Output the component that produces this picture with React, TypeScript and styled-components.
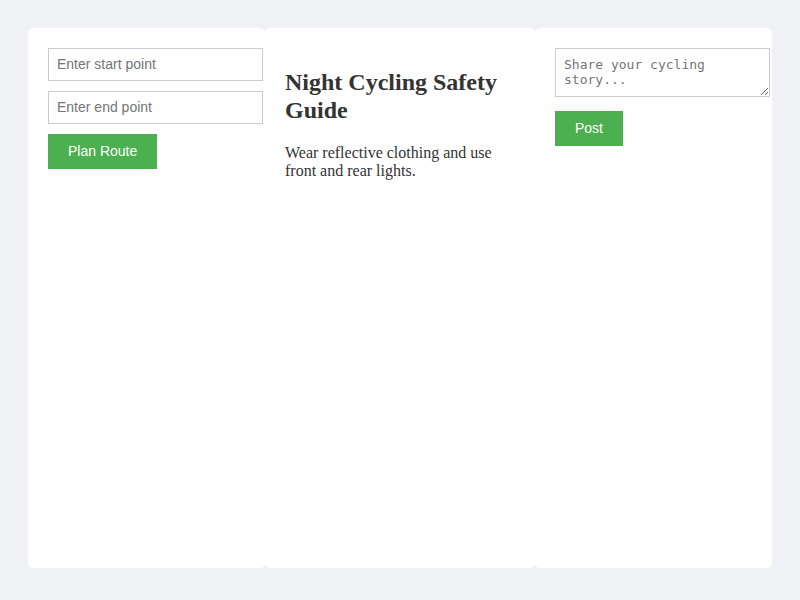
import React from 'react';
import styled, { createGlobalStyle } from 'styled-components';

const GlobalStyle = createGlobalStyle`
  body {
    margin: 0;
    background: #f0f1f5;
    font-family: "Liberation Sans", Arial, sans-serif;
    color: #333;
  }
`;

const Page = styled.div`
  padding: 28px;
`;

const Columns = styled.div`
  display: grid;
  grid-template-columns: 237px 270px 237px;
  height: 540px;
`;

const Panel = styled.section`
  background: #fff;
  border-radius: 5px;
  padding: 20px;
  box-sizing: border-box;
`;

const Field = styled.input`
  display: block;
  width: 100%;
  padding: 8px;
  margin: 0 0 10px;
  border: 1px solid #ccc;
  font-family: "Liberation Sans", Arial, sans-serif;
  font-size: 14px;
  line-height: 15px;
  height: 15px;
  color: #333;
  &::placeholder {
    color: #757575;
  }
`;

const StoryBox = styled.textarea`
  display: block;
  width: 100%;
  height: 31px;
  padding: 8px;
  margin: 0 0 14px;
  border: 1px solid #ccc;
  font-family: "DejaVu Sans Mono", "Liberation Mono", monospace;
  font-size: 13px;
  line-height: 15px;
  color: #333;
  &::placeholder {
    color: #757575;
  }
`;

const Button = styled.button`
  display: block;
  background: #4caf50;
  color: #fff;
  border: none;
  padding: 10px 20px;
  font-family: "Liberation Sans", Arial, sans-serif;
  font-size: 14px;
  line-height: 15px;
  height: 35px;
  cursor: pointer;
`;

const Title = styled.h2`
  font-family: "Liberation Serif", "Times New Roman", serif;
  font-size: 24px;
  font-weight: bold;
  margin: 20px 0;
  line-height: 28px;
  color: #333;
`;

const Body = styled.p`
  font-family: "Liberation Serif", "Times New Roman", serif;
  font-size: 16px;
  line-height: 18px;
  margin: 0;
  color: #333;
`;

export default function App() {
  return (
    <Page>
      <GlobalStyle />
      <Columns>
        <Panel>
          <Field placeholder="Enter start point" />
          <Field placeholder="Enter end point" />
          <Button>Plan Route</Button>
        </Panel>
        <Panel>
          <Title>Night Cycling Safety Guide</Title>
          <Body>Wear reflective clothing and use front and rear lights.</Body>
        </Panel>
        <Panel>
          <StoryBox rows={2} placeholder="Share your cycling story..." />
          <Button>Post</Button>
        </Panel>
      </Columns>
    </Page>
  );
}
